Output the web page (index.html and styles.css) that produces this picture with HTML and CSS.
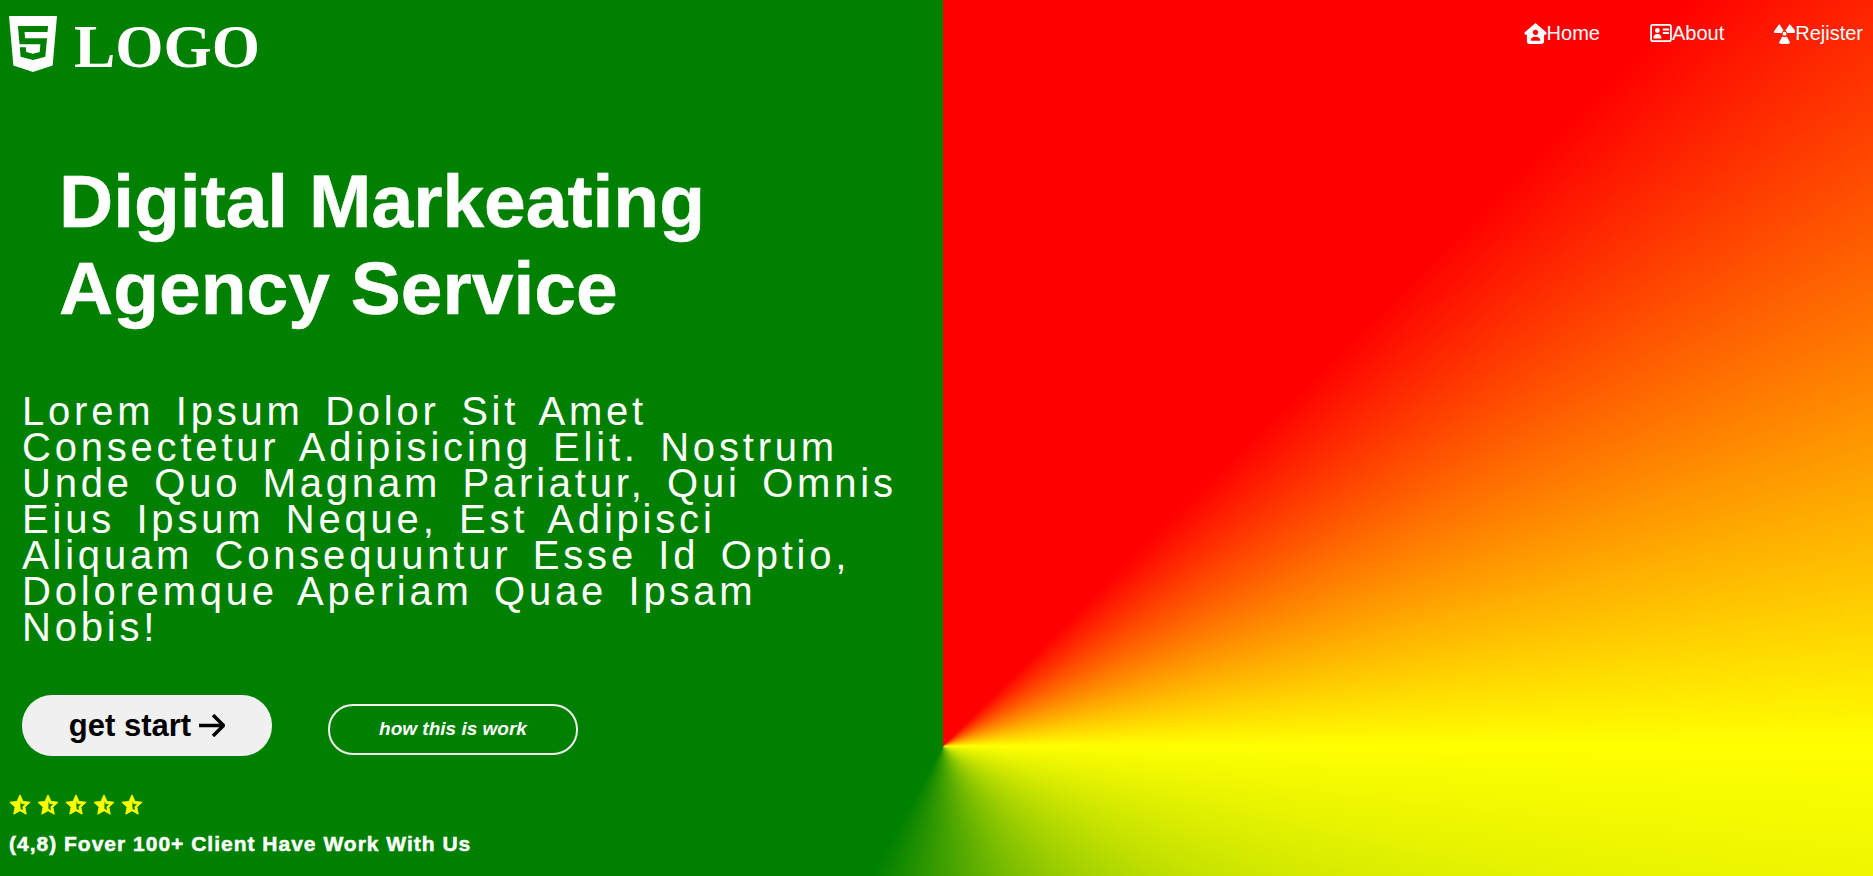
FILE: index.html
```html
<!DOCTYPE html>
<html lang="en">
  <head>
    <title>Digital Marketing</title>
    <link rel="stylesheet" href="styles.css">
  </head>
  <body>
    <header class="header">
      <div class="logo">
        <svg class="logo-icon" viewBox="0 32 384 448"><path fill="#fff" fill-rule="evenodd" d="M0 32l34.9 395.8L191.5 480l157.6-52.2L384 32H0zm308.2 127.9H124.4l4.1 49.4h175.6l-13.6 148.4-97.9 27v.3h-1.1l-98.7-27.3-6-75.8h47.7L138 320l53.5 14.5 53.7-14.5 6-62.2H84.3L71.5 112.2h241.1l-4.4 47.7z"/></svg>
        <span class="logo-text">LOGO</span>
      </div>
      <nav class="nav">
        <a class="nav-link" href="#">
          <svg class="nav-icon icon-home" viewBox="0 0 24 22"><path fill="#fff" fill-rule="evenodd" d="M12 0L0.500 10q-.5 2 1 2.200h1.500V19.500Q3 22 5.500 22h13q2.500 0 2.500-2.500V12.200h1.500q1.500-.2 1-2.200zM12 7a2.800 2.800 0 1 1 0 5.600A2.800 2.800 0 0 1 12 7zM7 18.500q0-4 5-4t5 4z"/></svg>Home
        </a>
        <a class="nav-link" href="#">
          <svg class="nav-icon icon-about" viewBox="0 0 24 20"><path fill="#fff" fill-rule="evenodd" d="M2.500 0h19Q24 0 24 2.500v15q0 2.500-2.500 2.500h-19Q0 20 0 17.500v-15Q0 0 2.500 0zM3 2Q2 2 2 3v14q0 1 1 1h18q1 0 1-1V3q0-1-1-1zM8 4.500a2.700 2.700 0 1 1 0 5.400a2.700 2.700 0 0 1 0-5.400zM3.500 16q0-5 4.500-5t4.500 5zM14 5h7v2.200h-7zM14 9h7v2.200h-7z"/></svg>About
        </a>
        <a class="nav-link" href="#">
          <svg class="nav-icon icon-rej" viewBox="0 0 24 24"><path fill="#fff" d="M6 1l5 7.500q-1.500 1-2 3H1q-1.500 0-1-2zM18 1l6 7.500q.5 3-1 3h-8q-.5-2-2-3zM12 10a2.300 2.300 0 1 1 0 4.600a2.300 2.300 0 0 1 0-4.600zM9.500 15.500q2.500 1.500 5 0l4 7q-1 1.500-6.500 1.500t-6.500-1.500z"/></svg>Rejister
        </a>
      </nav>
    </header>

    <main class="hero">
      <h1 class="title">Digital Markeating<br>Agency Service</h1>
      <p class="lead">Lorem Ipsum Dolor Sit Amet Consectetur Adipisicing Elit. Nostrum Unde Quo Magnam Pariatur, Qui Omnis Eius Ipsum Neque, Est Adipisci Aliquam Consequuntur Esse Id Optio, Doloremque Aperiam Quae Ipsam Nobis!</p>
      <div class="actions">
        <a class="btn-start" href="#">get start
          <svg class="arrow" viewBox="0 0 26 23"><path fill="none" stroke="#000" stroke-width="3.500" d="M0 11.500h24M14 1l10.500 10.500L14 22"/></svg>
        </a>
        <a class="btn-how" href="#">how this is work</a>
      </div>
      <div class="stars">
        <svg class="star" viewBox="0 0 24 24"><use href="#half-star"/></svg>
        <svg class="star" viewBox="0 0 24 24"><use href="#half-star"/></svg>
        <svg class="star" viewBox="0 0 24 24"><use href="#half-star"/></svg>
        <svg class="star" viewBox="0 0 24 24"><use href="#half-star"/></svg>
        <svg class="star" viewBox="0 0 24 24"><use href="#half-star"/></svg>
      </div>
      <p class="rating">(4,8) Fover 100+ Client Have Work With Us</p>
    </main>

    <svg class="defs" width="0" height="0">
      <symbol id="half-star" viewBox="0 0 24 24">
        <path fill="#ff0" stroke="#ff0" stroke-width="1" fill-rule="evenodd" d="M12 1l3.300 7.100 7.700.9-5.700 5.300 1.500 7.700L12 18.200 5.200 22l1.500-7.700L1 9l7.700-.9zM12 6v10.300l4 2.200-.9-4.500 3.300-3.100-4.500-.5z"/>
      </symbol>
    </svg>
  </body>
</html>
```

FILE: styles.css
```css
* {
  box-sizing: border-box;
}

body {
  margin: 0;
  height: 876px;
  overflow: hidden;
  color: white;
  font-family: "Liberation Sans", Arial, sans-serif;
  background: conic-gradient(at 943px 746px, red 45deg, yellow 90deg, green 209deg);
}

a {
  color: inherit;
  text-decoration: none;
}

.header {
  display: flex;
  justify-content: space-between;
  align-items: flex-start;
}

.logo {
  display: flex;
  align-items: flex-start;
  padding: 16px 0 0 9px;
}

.logo-icon {
  width: 48px;
  height: 56px;
}

.logo-text {
  margin-left: 17px;
  font-family: "Liberation Serif", serif;
  font-size: 62px;
  font-weight: bold;
  line-height: 60px;
}

.nav {
  display: flex;
  gap: 50px;
  padding: 21px 10px 0 0;
}

.nav-link {
  display: flex;
  align-items: center;
  font-size: 20px;
  line-height: 24px;
}

.icon-home {
  width: 23px;
  height: 21px;
}

.icon-about {
  width: 22px;
  height: 18px;
}

.icon-rej {
  width: 21px;
  height: 21px;
}

.hero {
  padding-top: 82px;
}

.title {
  margin: 0 0 0 59px;
  font-size: 75px;
  line-height: 87px;
  -webkit-text-stroke: 0.5px white;
}

.lead {
  width: 880px;
  margin: 61px 0 0 22px;
  font-size: 40px;
  line-height: 36px;
  letter-spacing: 3.8px;
  word-spacing: 6.5px;
}

.actions {
  display: flex;
  align-items: center;
  gap: 56px;
  margin: 50px 0 0 22px;
}

.btn-start {
  display: flex;
  align-items: center;
  justify-content: center;
  gap: 8px;
  width: 250px;
  height: 61px;
  border-radius: 30px;
  background-color: #f0f0f0;
  color: black;
  font-size: 31px;
  font-weight: bold;
}

.arrow {
  width: 26px;
  height: 23px;
}

.btn-how {
  display: flex;
  align-items: center;
  justify-content: center;
  width: 250px;
  height: 51px;
  margin-top: 7px;
  border: 2px solid #f0f0f0;
  border-radius: 25px;
  font-size: 19px;
  font-style: italic;
  font-weight: bold;
}

.stars {
  display: flex;
  gap: 6px;
  margin: 38px 0 0 9px;
}

.star {
  width: 22px;
  height: 22px;
}

.rating {
  margin: 16px 0 0 9px;
  font-size: 21px;
  font-weight: bold;
  letter-spacing: 1px;
  -webkit-text-stroke: 0.5px white;
}

.defs {
  position: absolute;
}
```
